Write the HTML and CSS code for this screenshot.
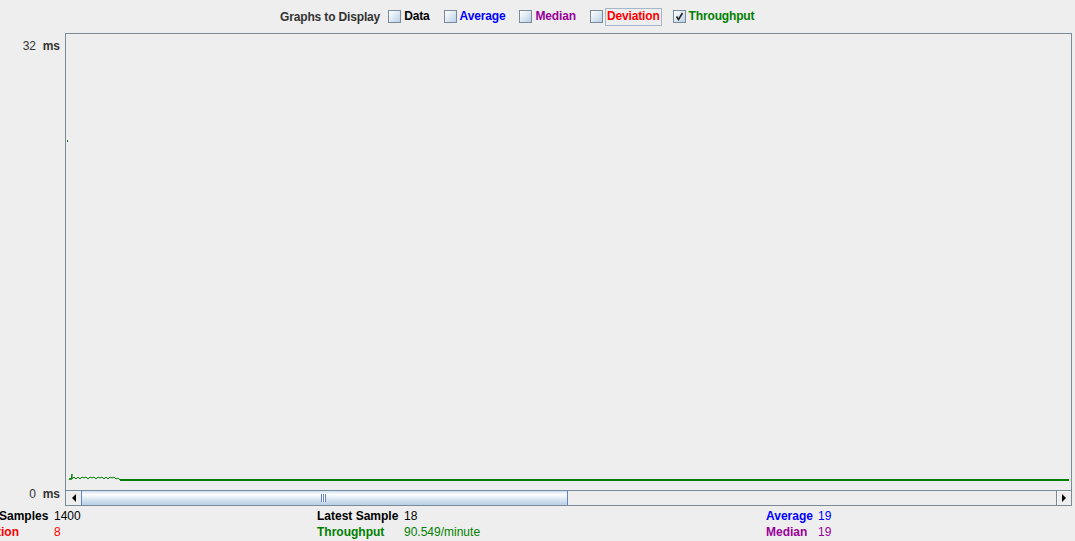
FILE: index.html
```html
<!DOCTYPE html>
<html>
<head>
<meta charset="utf-8">
<link rel="stylesheet" href="styles.css">
</head>
<body>
<div class="page">
  <div class="legend">
    <span class="legend-title">Graphs to Display</span>
    <label class="opt"><span class="cb"></span><span class="lbl c-black">Data</span></label>
    <label class="opt"><span class="cb"></span><span class="lbl c-blue">Average</span></label>
    <label class="opt"><span class="cb"></span><span class="lbl c-purple">Median</span></label>
    <label class="opt"><span class="cb"></span><span class="lbl c-red focus">Deviation</span></label>
    <label class="opt"><span class="cb checked"><svg width="11" height="11" viewBox="0 0 11 11"><path d="M2.5 5.5 L4.5 8.5 L8.5 2" fill="none" stroke="#222" stroke-width="1.6"/></svg></span><span class="lbl c-green">Throughput</span></label>
  </div>
  <div class="main">
    <div class="axis">
      <span class="axis-label"><span class="num">32</span>&nbsp; ms</span>
      <span class="axis-label bottom"><span class="num">0</span>&nbsp; ms</span>
    </div>
    <div class="chart">
      <div class="plot">
        <svg class="plot-svg" width="1004" height="456" viewBox="0 0 1004 456">
          <rect x="1" y="106" width="1" height="2" fill="#008000"/>
          <polyline points="3,446 4,444 5,446 6,440 6,445 8,443 10,445 12,443 14,445 16,443 18,444 20,443 22,445 24,443 26,444 28,443 30,445 32,443 34,444 36,443 38,445 40,443 42,445 44,443 46,444 48,443 50,445 52,444 54,446" fill="none" stroke="#008000" stroke-width="1"/>
          <rect x="54" y="445" width="949" height="2" fill="#008000"/>
        </svg>
      </div>
      <div class="scrollbar">
        <div class="sb-btn left"><span class="tri-left"></span></div>
        <div class="sb-thumb"><span class="grip"></span></div>
        <div class="sb-track"></div>
        <div class="sb-btn right"><span class="tri-right"></span></div>
      </div>
    </div>
  </div>
  <div class="stats">
    <div class="col col1">
      <div class="row"><span class="k c-black">No of Samples</span><span class="v c-black">1400</span></div>
      <div class="row"><span class="k c-red">Deviation</span><span class="v c-red">8</span></div>
    </div>
    <div class="col col2">
      <div class="row"><span class="k c-black">Latest Sample</span><span class="v c-black">18</span></div>
      <div class="row"><span class="k c-green">Throughput</span><span class="v c-green">90.549/minute</span></div>
    </div>
    <div class="col col3">
      <div class="row"><span class="k c-blue">Average</span><span class="v c-blue">19</span></div>
      <div class="row"><span class="k c-purple">Median</span><span class="v c-purple">19</span></div>
    </div>
  </div>
</div>
</body>
</html>
```
FILE: styles.css
```css
html, body {
  margin: 0;
  padding: 0;
  background: #eeeeee;
}
body {
  font-family: "Liberation Sans", Arial, sans-serif;
  font-size: 12px;
  font-weight: bold;
  color: #333333;
  width: 1075px;
  height: 541px;
  overflow: hidden;
}
.page {
  display: flex;
  flex-direction: column;
  width: 1075px;
  height: 541px;
}
.legend {
  height: 33px;
  display: flex;
  align-items: center;
  padding-left: 280px;
  box-sizing: border-box;
  letter-spacing: -0.15px;
}
.legend-title {
  color: #333333;
  margin-right: 8px;
}
.opt {
  display: flex;
  align-items: center;
  margin-right: 14px;
}
.cb {
  width: 11px;
  height: 11px;
  border: 1px solid #7a8a99;
  background: linear-gradient(135deg, #ffffff 0%, #dde8f3 50%, #b8cfe5 100%);
  margin-right: 3px;
  display: flex;
  align-items: center;
  justify-content: center;
}
.cb svg { display: block; }
.lbl { line-height: 15px; }
.focus {
  border: 1px solid #a3b8cc;
  padding: 0 1px 1px 1px;
  margin-left: -1px;
  margin-right: -3px;
}
.c-black { color: #000000; }
.c-blue { color: #0000ff; }
.c-purple { color: #990099; }
.c-red { color: #ff0000; }
.c-green { color: #008000; }

.main {
  display: flex;
  height: 473px;
}
.axis {
  width: 65px;
  display: flex;
  flex-direction: column;
  justify-content: space-between;
  align-items: flex-end;
  box-sizing: border-box;
  padding: 6px 5px 5px 0;
}
.axis-label {
  color: #333333;
  white-space: nowrap;
  font-weight: bold;
}
.axis-label .num { font-weight: normal; }
.chart {
  width: 1007px;
  border: 1px solid #7a8a99;
  border-bottom: none;
  display: flex;
  flex-direction: column;
  box-sizing: border-box;
}
.plot {
  flex: 1;
  overflow: hidden;
}
.plot-svg { display: block; }
.scrollbar {
  height: 16px;
  border-top: 1px solid #7a8a99;
  border-bottom: 1px solid #7a8a99;
  box-sizing: border-box;
  display: flex;
}
.sb-btn {
  width: 15px;
  display: flex;
  align-items: center;
  justify-content: center;
  background: #eeeeee;
}
.sb-btn.right {
  width: 14px;
  border-left: 1px solid #7a8a99;
  box-shadow: inset 1px 1px 0 #ffffff;
}
.tri-left {
  width: 0; height: 0;
  border-top: 4px solid transparent;
  border-bottom: 4px solid transparent;
  border-right: 4px solid #000000;
}
.tri-right {
  width: 0; height: 0;
  border-top: 4px solid transparent;
  border-bottom: 4px solid transparent;
  border-left: 4px solid #000000;
}
.sb-thumb {
  width: 487px;
  border: 1px solid #6382bf;
  border-top: none;
  border-bottom: none;
  box-sizing: border-box;
  background: linear-gradient(to bottom, #c8ddf2 0%, #ffffff 25%, #dde8f3 55%, #b8cfe5 100%);
  display: flex;
  align-items: center;
  justify-content: center;
}
.grip {
  width: 5px;
  height: 8px;
  background: linear-gradient(to right, #6382bf 0 1px, #ffffff 1px 2px, #6382bf 2px 3px, #ffffff 3px 4px, #6382bf 4px 5px);
  margin-right: 3px;
}
.sb-track {
  flex: 1;
  background: #eeeeee;
}

.stats {
  display: flex;
  height: 35px;
  padding-top: 2px;
  box-sizing: border-box;
}
.col {
  display: flex;
  flex-direction: column;
}
.row {
  display: flex;
  height: 16px;
  align-items: center;
  white-space: nowrap;
}
.v { font-weight: normal; }
.col1 { margin-left: -35px; width: 352px; }
.col1 .k { width: 89px; }
.col2 { width: 449px; }
.col2 .k { width: 87px; }
.col3 .k { width: 52px; }
```
